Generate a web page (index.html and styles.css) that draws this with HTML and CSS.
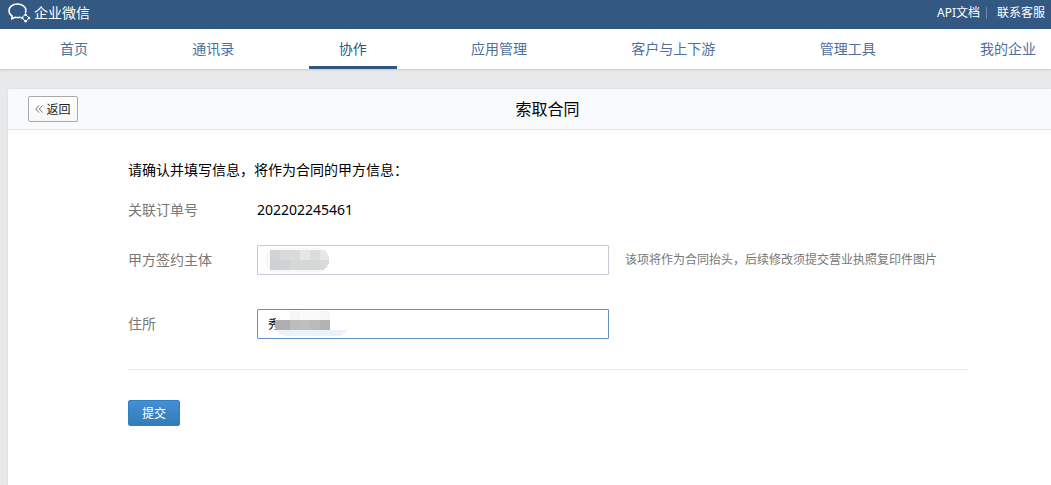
FILE: index.html
```
<!DOCTYPE html>
<html lang="zh-CN">
<head>
    <meta charset="UTF-8">
    <title>企业微信</title>
    <link rel="stylesheet" href="styles.css">
</head>
<body>
<header class="top">
    <a class="logo" href="#">
        <svg class="logo_icon" width="23" height="20" viewBox="0 0 23 20" fill="none" stroke="#fff" stroke-width="1.5" stroke-linecap="round" stroke-linejoin="round">
            <path d="M17.500 9.500c.3-.6.4-1.200.4-1.900C17.900 3.900 14.200 1 9.400 1S1 3.900 1 7.700c0 2.200 1.200 4.200 3.200 5.400L3.600 16l3.200-1.700c1.700.4 3.700.4 5.400 0"/>
            <path stroke-width="1" d="M17.600 11.500l3.600 3.500-3.600 3.500-3.500-3.500z"/>
            <circle cx="17.600" cy="11.700" r="1.200" fill="#fff" stroke="none"/>
            <circle cx="21" cy="15" r="1.200" fill="#fff" stroke="none"/>
            <circle cx="17.600" cy="18.300" r="1.200" fill="#fff" stroke="none"/>
            <circle cx="14.300" cy="15" r="1.200" fill="#fff" stroke="none"/>
        </svg>
        <span>企业微信</span>
    </a>
    <div class="top_links">
        <a href="#">API文档</a>
        <span class="top_line"></span>
        <a href="#">联系客服</a>
    </div>
</header>
<nav class="nav">
    <a class="nav_item" href="#">首页</a>
    <a class="nav_item" href="#">通讯录</a>
    <a class="nav_item nav_item_active" href="#">协作</a>
    <a class="nav_item" href="#">应用管理</a>
    <a class="nav_item" href="#">客户与上下游</a>
    <a class="nav_item" href="#">管理工具</a>
    <a class="nav_item" href="#">我的企业</a>
</nav>
<main class="card">
    <div class="card_head">
        <button type="button" class="btn_back">
            <svg width="8" height="8" viewBox="0 0 8 8" fill="none" stroke="#777">
                <path d="M4 0.500L0.800 4L4 7.500M7.500 0.500L4.300 4L7.500 7.500"/>
            </svg>
            返回
        </button>
        <h1 class="card_title">索取合同</h1>
    </div>
    <form class="form">
        <p class="form_tips">请确认并填写信息，将作为合同的甲方信息：</p>
        <div class="row row_order">
            <span class="label">关联订单号</span>
            <span class="order">202202245461</span>
        </div>
        <div class="row row_party">
            <label class="label" for="party">甲方签约主体</label>
            <div class="field">
                <input type="text" id="party" class="text">
                <svg class="mask" width="90" height="28" viewBox="0 0 90 28" shape-rendering="crispEdges">
                    <rect x="7" y="2" width="64" height="25" rx="12" fill="#f8f8f8"/>
                    <path fill="#d2d3d4" d="M12 4h10v10h-10z"/>
                    <path fill="#d9dadb" d="M22 4h20v10h-20z"/>
                    <path fill="#e5e6e6" d="M42 4h10v10h-10z"/>
                    <path fill="#dcdddd" d="M52 4h10v10h-10z"/>
                    <path fill="#e6e7e7" d="M62 4h4l3 3 2 4v3h-9z"/>
                    <path fill="#cfd0d1" d="M12 14h10v10h-10z"/>
                    <path fill="#d1d2d3" d="M22 14h10v10h-10z"/>
                    <path fill="#d6d7d7" d="M32 14h30v10h-30z"/>
                    <path fill="#d9dada" d="M62 14h9v3l-3 5-3 2h-3z"/>
                </svg>
            </div>
            <span class="hint">该项将作为合同抬头，后续修改须提交营业执照复印件图片</span>
        </div>
        <div class="row row_addr">
            <label class="label" for="addr">住所</label>
            <div class="field">
                <input type="text" id="addr" class="text text_active" value="秀">
                <svg class="mask" width="90" height="28" viewBox="0 0 90 28" shape-rendering="crispEdges">
                    <path fill="#fafafa" d="M17 10l5-6v6z"/>
                    <path fill="#f5f5f5" d="M32 1h10v9h-10z"/>
                    <path fill="#fafafa" d="M42 1h20v9h-20z"/>
                    <path fill="#f6f6f6" d="M62 1h10v9h-10z"/>
                    <path fill="#adadae" d="M17 10h5v10h-4l-1-4z"/>
                    <path fill="#afafb1" d="M22 10h10v10h-10z"/>
                    <path fill="#bdbdbe" d="M32 10h10v10h-10z"/>
                    <path fill="#bfbfc0" d="M42 10h10v10h-10z"/>
                    <path fill="#b9babb" d="M52 10h10v10h-10z"/>
                    <path fill="#b2b3b5" d="M62 10h10v10h-10z"/>
                    <path fill="#edf2f8" d="M18 20h72l-7 6h-56l-6-2z"/>
                </svg>
            </div>
        </div>
        <div class="form_foot">
            <button type="submit" class="btn_submit">提交</button>
        </div>
    </form>
</main>
</body>
</html>
```
FILE: styles.css
```
* {
    box-sizing: border-box;
}
body {
    display: flex;
    flex-direction: column;
    min-height: 100vh;
    margin: 0;
    background-color: #e7e9eb;
    color: #000;
    font-family: "Noto Sans", "Noto Sans CJK SC", sans-serif;
    font-size: 14px;
    line-height: 20px;
}
a {
    text-decoration: none;
}
button, input {
    font-family: inherit;
    font-size: 12px;
}
.top {
    display: flex;
    justify-content: space-between;
    align-items: center;
    height: 29px;
    padding: 0 6px 4px 8px;
    background-color: #335983;
}
.logo {
    display: flex;
    align-items: center;
    gap: 3px;
    color: #fff;
}
.top_links {
    display: flex;
    align-items: center;
    gap: 6px;
    font-size: 12px;
}
.top_links a {
    color: #fff;
}
.top_line {
    width: 1px;
    height: 12px;
    margin-right: 4px;
    background-color: #7089a8;
}
.nav {
    display: flex;
    justify-content: space-between;
    height: 40px;
    padding: 0 15px 0 30px;
    background-color: #fff;
    box-shadow: 0 1px 2px rgba(0, 0, 0, 0.15);
}
.nav_item {
    padding: 0 30px;
    border-bottom: 3px solid transparent;
    color: #4c70a0;
    line-height: 40px;
    white-space: nowrap;
}
.nav_item:last-child {
    padding-right: 0;
}
.nav_item_active {
    border-bottom-color: #2e5882;
    color: #2e5882;
}
.card {
    flex: 1;
    margin: 20px 0 0 8px;
    border-top-left-radius: 3px;
    background-color: #fff;
    box-shadow: 0 0 2px rgba(0, 0, 0, 0.1);
}
.card_head {
    display: flex;
    align-items: center;
    height: 41px;
    padding: 0 34px 0 20px;
    border-bottom: 1px solid #e4e6e9;
    border-top-left-radius: 3px;
    background-color: #f9fafc;
}
.card_title {
    flex: 1;
    margin: 0;
    font-size: 16px;
    font-weight: normal;
    text-align: center;
}
.btn_back {
    display: flex;
    justify-content: center;
    align-items: center;
    gap: 3px;
    width: 50px;
    height: 26px;
    padding: 0;
    border: 1px solid #a9a9a9;
    border-radius: 2px;
    background: linear-gradient(#fff, #f7f7f7);
    color: #222;
}
.form {
    max-width: 960px;
    padding: 30px 0 30px 120px;
}
.form_tips {
    margin: 0;
}
.row {
    display: flex;
    align-items: center;
}
.row_order {
    margin-top: 20px;
}
.row_party {
    margin-top: 25px;
}
.row_addr {
    margin-top: 34px;
}
.label {
    width: 129px;
    color: #787878;
}
.field {
    position: relative;
    width: 352px;
}
.text {
    display: block;
    width: 100%;
    height: 30px;
    padding: 0 10px;
    border: 1px solid #c6cad6;
    border-radius: 1px;
    background-color: #fff;
    outline: none;
}
.text_active {
    border-color: #6292c5;
}
.mask {
    position: absolute;
    top: 1px;
    left: 1px;
    pointer-events: none;
}
.hint {
    margin-left: 16px;
    color: #787878;
    font-size: 12px;
}
.form_foot {
    margin-top: 30px;
    padding-top: 30px;
    border-top: 1px solid #e4e6e9;
}
.btn_submit {
    display: block;
    width: 52px;
    height: 26px;
    padding: 0;
    border: 1px solid #2f7fc3;
    border-radius: 2px;
    background: linear-gradient(#438fd6, #337cb6);
    color: #fff;
}
```
